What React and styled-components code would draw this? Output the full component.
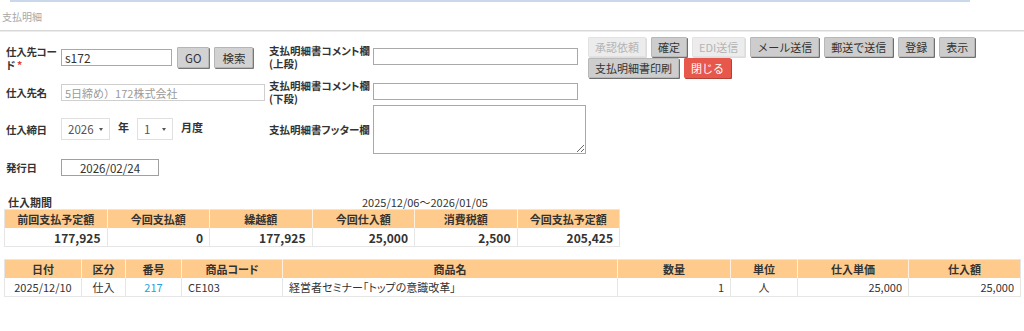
import React from "react";
import styled, { createGlobalStyle } from "styled-components";

const GlobalStyle = createGlobalStyle`
  body {
    margin: 0;
    background: #fff;
    font-family: "Noto Sans CJK JP", "Noto Sans", sans-serif;
    font-size: 11px;
    color: #333;
    font-feature-settings: "palt";
  }
`;

const summary = [
  { label: "前回支払予定額", value: "177,925" },
  { label: "今回支払額", value: "0" },
  { label: "繰越額", value: "177,925" },
  { label: "今回仕入額", value: "25,000" },
  { label: "消費税額", value: "2,500" },
  { label: "今回支払予定額", value: "205,425" },
];

const detailCols = [
  { label: "日付", width: 77, align: "center" },
  { label: "区分", width: 44, align: "center" },
  { label: "番号", width: 56, align: "center" },
  { label: "商品コード", width: 101, align: "left" },
  { label: "商品名", width: 335, align: "left" },
  { label: "数量", width: 113, align: "right" },
  { label: "単位", width: 67, align: "center" },
  { label: "仕入単価", width: 111, align: "right" },
  { label: "仕入額", width: 112, align: "right" },
];

const detailRow = ["2025/12/10", "仕入", "217", "CE103", "経営者セミナー「トップの意識改革」", "1", "人", "25,000", "25,000"];

const App = () => {
  return (
    <Page>
      <GlobalStyle />
      <TopRule />
      <Title>支払明細</Title>
      <Divider />

      <FormArea>
        <LeftForm>
          <Row $height={21}>
            <Label>
              仕入先コー
              <br />
              ド <Required>*</Required>
            </Label>
            <TextInput defaultValue="s172" $width={111} />
            <Button $ml={5}>GO</Button>
            <Button $ml={5}>検索</Button>
          </Row>
          <Row $height={17} $mt={16}>
            <Label>仕入先名</Label>
            <TextInput defaultValue="5日締め）172株式会社" $width={204} disabled />
          </Row>
          <Row $height={22} $mt={17}>
            <Label>仕入締日</Label>
            <SelectBox $width={49}>
              <span>2026</span>
              <Caret />
            </SelectBox>
            <Unit>年</Unit>
            <SelectBox $width={36}>
              <span>1</span>
              <Caret />
            </SelectBox>
            <Unit>月度</Unit>
          </Row>
          <Row $height={17} $mt={19}>
            <Label>発行日</Label>
            <DateInput defaultValue="2026/02/24" />
          </Row>
        </LeftForm>

        <MidForm>
          <Row $height={17}>
            <MidLabel>
              支払明細書コメント欄
              <br />
              (上段)
            </MidLabel>
            <TextInput $width={205} />
          </Row>
          <Row $height={17} $mt={18}>
            <MidLabel>
              支払明細書コメント欄
              <br />
              (下段)
            </MidLabel>
            <TextInput $width={205} />
          </Row>
          <Row $height={49} $mt={5}>
            <MidLabel>支払明細書フッター欄</MidLabel>
            <Memo />
          </Row>
        </MidForm>

        <Actions>
          <ButtonRow>
            <ActionButton disabled>承認依頼</ActionButton>
            <ActionButton>確定</ActionButton>
            <ActionButton disabled>EDI送信</ActionButton>
            <ActionButton>メール送信</ActionButton>
            <ActionButton>郵送で送信</ActionButton>
            <ActionButton>登録</ActionButton>
            <ActionButton>表示</ActionButton>
          </ButtonRow>
          <ButtonRow>
            <ActionButton>支払明細書印刷</ActionButton>
            <ActionButton $danger>閉じる</ActionButton>
          </ButtonRow>
        </Actions>
      </FormArea>

      <Period>
        <PeriodLabel>仕入期間</PeriodLabel>
        <span>2025/12/06～2026/01/05</span>
      </Period>

      <SummaryTable>
        <thead>
          <tr>
            {summary.map((s) => (
              <Th key={s.label}>{s.label}</Th>
            ))}
          </tr>
        </thead>
        <tbody>
          <tr>
            {summary.map((s) => (
              <SumTd key={s.label}>{s.value}</SumTd>
            ))}
          </tr>
        </tbody>
      </SummaryTable>

      <DetailTable>
        <colgroup>
          {detailCols.map((c) => (
            <col key={c.label} style={{ width: c.width }} />
          ))}
        </colgroup>
        <thead>
          <tr>
            {detailCols.map((c) => (
              <Th key={c.label}>{c.label}</Th>
            ))}
          </tr>
        </thead>
        <tbody>
          <tr>
            {detailRow.map((v, i) => (
              <Td key={i} $align={detailCols[i].align}>
                {i === 2 ? <LinkText>{v}</LinkText> : v}
              </Td>
            ))}
          </tr>
        </tbody>
      </DetailTable>
    </Page>
  );
};

const Page = styled.div`
  width: 1024px;
  height: 331px;
  overflow: hidden;
`;

const TopRule = styled.div`
  margin: 0 54px 0 10px;
  height: 2px;
  background: #c9d8ea;
`;

const Title = styled.div`
  padding: 7px 0 0 2px;
  height: 21px;
  font-size: 10px;
  color: #a8a8a8;
`;

const Divider = styled.div`
  height: 1px;
  background: #d8d8d8;
  border-bottom: 1px solid #ececec;
`;

const FormArea = styled.div`
  display: flex;
  padding: 5px 0 0 4px;
  height: 152px;
`;

const LeftForm = styled.div`
  width: 262px;
  padding-top: 10px;
`;

const MidForm = styled.div`
  width: 322px;
  padding-top: 11px;
`;

const Row = styled.div`
  display: flex;
  align-items: center;
  height: ${(p) => p.$height}px;
  margin-top: ${(p) => p.$mt || 0}px;
`;

const Label = styled.div`
  width: 57px;
  flex: none;
  padding-left: 2px;
  box-sizing: border-box;
  font-weight: bold;
  font-size: 10.5px;
  line-height: 13px;
  letter-spacing: -0.3px;
  white-space: nowrap;
`;

const MidLabel = styled.div`
  width: 107px;
  flex: none;
  font-weight: bold;
  font-size: 10.5px;
  line-height: 13px;
  padding-left: 3px;
  box-sizing: border-box;
`;

const Required = styled.span`
  color: #e03c31;
`;

const TextInput = styled.input`
  box-sizing: border-box;
  width: ${(p) => p.$width}px;
  height: 17px;
  border: 1px solid #a9a9a9;
  padding: 0 3px;
  font-family: inherit;
  font-size: 12px;
  color: #333;
  background: #fff;
  outline: none;

  &:disabled {
    border-color: #cfcfcf;
    color: #9a9a9a;
    font-size: 11px;
  }
`;

const DateInput = styled.input`
  box-sizing: border-box;
  width: 98px;
  height: 17px;
  border: 1px solid #a0a0a0;
  text-align: center;
  font-family: inherit;
  font-size: 11.5px;
  color: #333;
  padding: 0;
`;

const Memo = styled.textarea`
  box-sizing: border-box;
  width: 213px;
  height: 49px;
  border: 1px solid #a9a9a9;
  font-family: inherit;
  resize: both;
  margin: 0;
`;

const SelectBox = styled.div`
  box-sizing: border-box;
  width: ${(p) => p.$width}px;
  height: 22px;
  display: flex;
  align-items: center;
  justify-content: space-between;
  padding: 0 6px 0 6px;
  border: 1px solid #e0e0e0;
  font-size: 11.5px;
  color: #555;
`;

const Caret = styled.span`
  width: 0;
  height: 0;
  border-left: 2.5px solid transparent;
  border-right: 2.5px solid transparent;
  border-top: 3px solid #555;
`;

const Unit = styled.span`
  font-weight: bold;
  margin: 0 8px;
  font-size: 11px;
  position: relative;
  top: -2px;
`;

const Button = styled.button`
  box-sizing: border-box;
  height: 21px;
  margin-left: ${(p) => p.$ml || 0}px;
  padding: 0 7px;
  font-family: inherit;
  font-size: 11.5px;
  color: #333;
  background: #d2d2d2;
  border: 1px solid #b5b5b5;
  box-shadow: 1px 1px 0 #777;
  border-radius: 1px;
`;

const Actions = styled.div`
  display: flex;
  flex-direction: column;
  gap: 1px;
`;

const ButtonRow = styled.div`
  display: flex;
  gap: 5px;
`;

const ActionButton = styled.button`
  box-sizing: border-box;
  height: 20px;
  padding: 0 6px;
  font-family: inherit;
  font-size: 11px;
  color: ${(p) => (p.$danger ? "#fff" : "#333")};
  background: ${(p) => (p.$danger ? "#e8574b" : "#cdcdcd")};
  border: 1px solid ${(p) => (p.$danger ? "#e8574b" : "#b8b8b8")};
  box-shadow: 1px 1px 0 ${(p) => (p.$danger ? "#b24236" : "#6f6f6f")};
  border-radius: 1px;

  &:disabled {
    color: #b4b4b4;
    background: #ececec;
    border-color: #e2e2e2;
    box-shadow: 1px 1px 0 #dcdcdc;
  }
`;

const Period = styled.div`
  display: flex;
  align-items: center;
  height: 14px;
  padding-left: 8px;
  margin-top: 6px;
  font-size: 11px;
`;

const PeriodLabel = styled.span`
  width: 354px;
  font-weight: bold;
`;

const SummaryTable = styled.table`
  margin-left: 4px;
  width: 616px;
  table-layout: fixed;
  border-collapse: collapse;
  border: 1px solid #e6e6e6;
`;

const Th = styled.th`
  height: 18px;
  padding: 0 4px;
  background: #ffcb8c;
  border-left: 1px solid #fff1de;
  font-size: 11px;
  font-weight: bold;
  color: #333;
  text-align: center;
  white-space: nowrap;

  &:first-child {
    border-left: none;
  }
`;

const SumTd = styled.td`
  height: 18px;
  padding: 0 6px;
  border-left: 1px solid #e6e6e6;
  text-align: right;
  font-weight: bold;
  font-size: 12px;
`;

const DetailTable = styled.table`
  margin: 12px 0 0 4px;
  width: 1016px;
  table-layout: fixed;
  border-collapse: collapse;
  border: 1px solid #e6e6e6;
`;

const Td = styled.td`
  height: 18px;
  padding: 0 6px;
  border-left: 1px solid #e6e6e6;
  text-align: ${(p) => p.$align};
  font-size: 11px;
  white-space: nowrap;
  overflow: hidden;
`;

const LinkText = styled.span`
  color: #2a9fd6;
`;

export default App;
